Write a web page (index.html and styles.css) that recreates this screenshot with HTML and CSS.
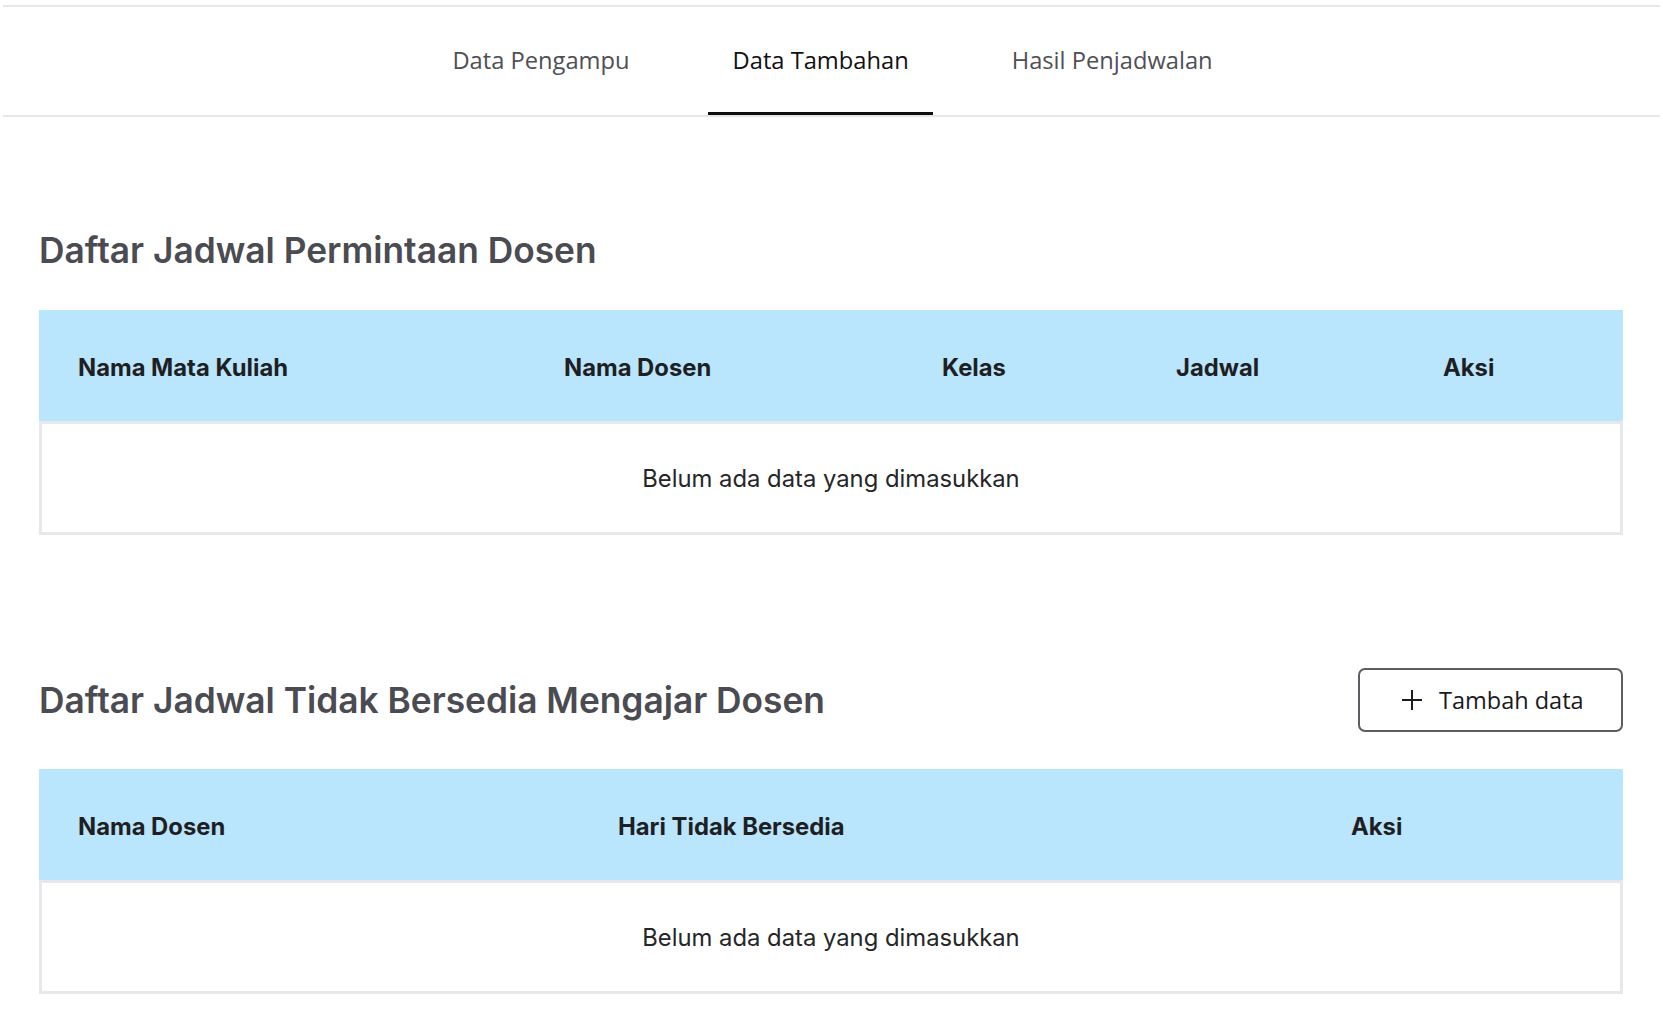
FILE: index.html
```html
<!DOCTYPE html>
<html lang="id">
<head>
<meta charset="utf-8">
<title>Data Tambahan</title>
<link rel="stylesheet" href="styles.css">
</head>
<body>
<div class="page">
  <nav class="tabs">
    <a class="tab">Data Pengampu</a>
    <a class="tab tab-active">Data Tambahan</a>
    <a class="tab">Hasil Penjadwalan</a>
  </nav>

  <main class="content">
    <section class="section section-first">
      <div class="section-head">
        <h2 class="section-title">Daftar Jadwal Permintaan Dosen</h2>
      </div>
      <div class="table">
        <div class="thead cols-5">
          <div class="th">Nama Mata Kuliah</div>
          <div class="th">Nama Dosen</div>
          <div class="th">Kelas</div>
          <div class="th">Jadwal</div>
          <div class="th">Aksi</div>
        </div>
        <div class="tbody">
          <div class="empty">Belum ada data yang dimasukkan</div>
        </div>
      </div>
    </section>

    <section class="section section-second">
      <div class="section-head">
        <h2 class="section-title">Daftar Jadwal Tidak Bersedia Mengajar Dosen</h2>
        <button class="btn-add" type="button">
          <svg class="btn-icon" viewBox="0 0 22 22" width="22" height="22" aria-hidden="true">
            <path d="M11 1v20M1 11h20" stroke="#1c1c1c" stroke-width="2" fill="none"/>
          </svg>
          <span>Tambah data</span>
        </button>
      </div>
      <div class="table">
        <div class="thead cols-3">
          <div class="th">Nama Dosen</div>
          <div class="th">Hari Tidak Bersedia</div>
          <div class="th">Aksi</div>
        </div>
        <div class="tbody">
          <div class="empty">Belum ada data yang dimasukkan</div>
        </div>
      </div>
    </section>
  </main>
</div>
</body>
</html>
```

FILE: styles.css
```css
* { box-sizing: border-box; }

html, body {
  margin: 0;
  padding: 0;
  background: #ffffff;
}

body {
  font-family: Inter, "Noto Sans", sans-serif;
  color: #1f1f23;
}

.page {
  padding-top: 5px;
}

.tabs {
  margin: 0 3px;
  border-top: 2px solid #e6e6eb;
  border-bottom: 2px solid #e6e6eb;
  display: flex;
  justify-content: center;
  gap: 54px;
  padding-left: 1px;
}

.tab {
  height: 108px;
  display: flex;
  align-items: center;
  padding: 0 24px 2px 25px;
  font-family: "Open Sans", "Noto Sans", sans-serif;
  font-size: 23.7px;
  color: #4f4f55;
  cursor: pointer;
}

.tab-active {
  color: #111113;
  box-shadow: inset 0 -3px 0 #0f0f10;
}

.content {
  padding: 0 40px 0 39px;
}

.section-first {
  padding-top: 112px;
}

.section-second {
  padding-top: 133px;
}

.section-head {
  display: flex;
  align-items: center;
  justify-content: space-between;
  min-height: 43px;
}

.section-first .section-head {
  margin-bottom: 38px;
}

.section-second .section-head {
  margin-bottom: 37px;
}

.section-title {
  margin: 0;
  font-family: Inter, "Noto Sans", sans-serif;
  font-weight: 600;
  font-size: 35.3px;
  line-height: 43px;
  letter-spacing: 0;
  color: #4b4b52;
}

.btn-add {
  width: 265px;
  height: 64px;
  border: 2px solid #5d5d63;
  border-radius: 7px;
  background: #ffffff;
  display: flex;
  align-items: center;
  justify-content: flex-start;
  gap: 16px;
  padding: 0 0 0 41px;
  font-family: "Open Sans", "Noto Sans", sans-serif;
  font-size: 23.5px;
  color: #1a1a1c;
  cursor: pointer;
}

.btn-icon {
  display: block;
  flex: none;
}

.table {
  width: 100%;
}

.thead {
  display: grid;
  height: 111px;
  align-items: center;
  background: #bae6fd;
}

.cols-5 {
  grid-template-columns: 486px 378px 234px 267px 1fr;
}

.cols-3 {
  grid-template-columns: 540px 733px 1fr;
}

.th {
  padding: 4px 0 0 39px;
  font-family: Inter, "Noto Sans", sans-serif;
  font-weight: 700;
  font-size: 23.8px;
  letter-spacing: 0;
  color: #1f1f23;
}

.tbody {
  border: 3px solid #e7e7ec;
  height: 114px;
  display: flex;
  align-items: center;
  justify-content: center;
}

.empty {
  font-family: Inter, "Noto Sans", sans-serif;
  font-size: 23.8px;
  color: #262629;
}
```
